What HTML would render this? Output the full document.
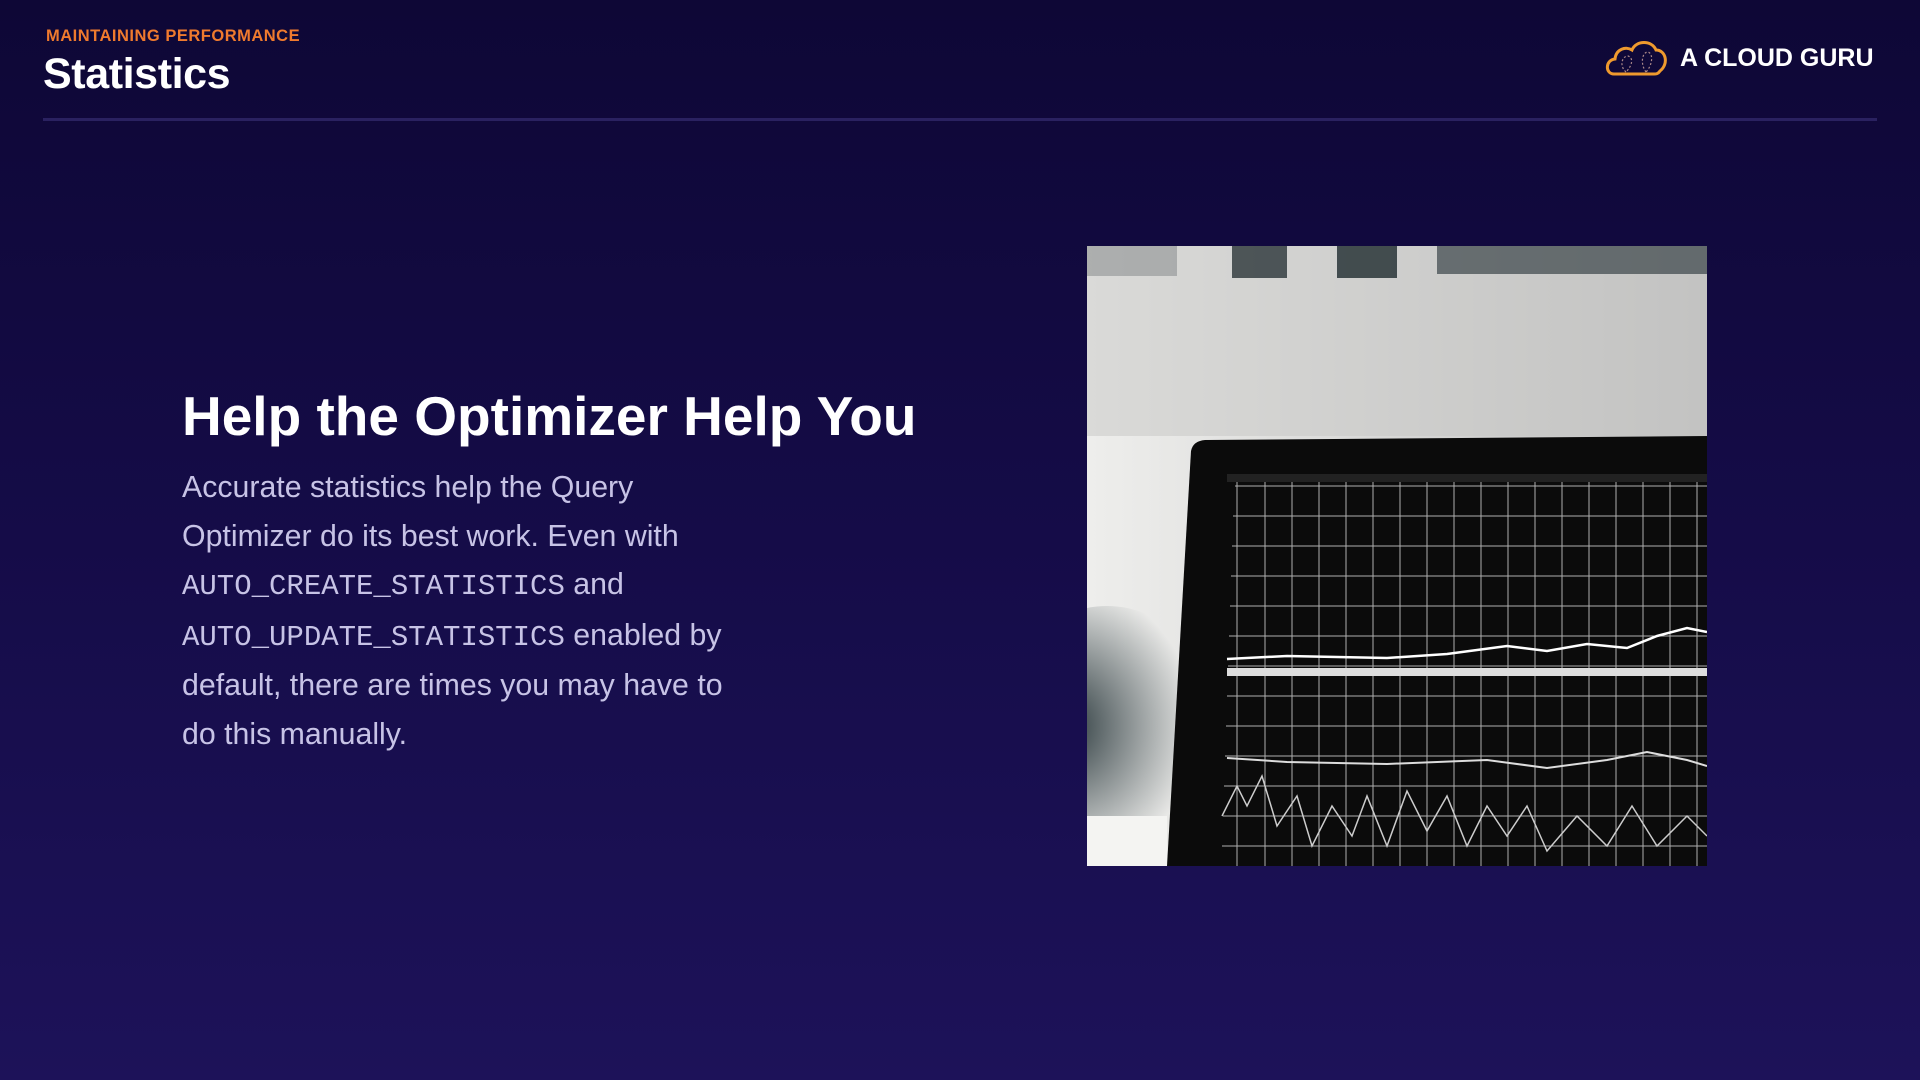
<!DOCTYPE html>
<html><head><meta charset="utf-8"><style>
html,body{margin:0;padding:0}
body{width:1920px;height:1080px;overflow:hidden;position:relative;background:linear-gradient(180deg,#0e0736 0%,#150c48 50%,#1d1259 100%);font-family:"Liberation Sans",sans-serif}
.sub{position:absolute;left:46px;top:27px;color:#ef7a2e;font-weight:bold;font-size:16.5px;letter-spacing:0.5px}
.title{position:absolute;left:43px;top:50px;color:#fff;font-weight:bold;font-size:43px;letter-spacing:-0.4px}
.rule{position:absolute;left:43px;top:118px;width:1834px;height:3px;background:#2a2160}
.logo{position:absolute;left:1604px;top:38px}
.logotext{position:absolute;left:1680px;top:44px;color:#fff;font-weight:bold;font-size:25px}
h1{position:absolute;left:182px;top:384px;margin:0;color:#fff;font-size:55px;font-weight:bold;letter-spacing:0px}
.body{position:absolute;left:182px;top:464px;color:#c7c3e6;font-size:30.3px;line-height:48.5px;width:700px}
.mono{font-family:"Liberation Mono",monospace;font-size:29px}
.img{position:absolute;left:1087px;top:246px;width:620px;height:620px}
</style></head><body>
<div class="sub">MAINTAINING PERFORMANCE</div>
<div class="title">Statistics</div>
<div class="rule"></div>
<svg class="logo" width="64" height="40" viewBox="0 0 64 40"><path d="M10 36 C1 36 1 22 11 21 C12 11 22 8 28 12 C32 2 48 2 52 12 C62 12 65 26 56 33 C54 36 52 36 50 36 Z" fill="none" stroke="#ef9a2e" stroke-width="3"/><path d="M22 34 C15 28 18 18 24 18 C30 20 28 28 22 34 M42 34 C36 26 38 14 44 14 C50 16 48 28 42 34" fill="none" stroke="#a88" stroke-width="1.2" stroke-dasharray="2 2"/></svg>
<div class="logotext">A CLOUD GURU</div>
<h1>Help the Optimizer Help You</h1>
<div class="body">Accurate statistics help the Query<br>Optimizer do its best work. Even with<br><span class="mono">AUTO_CREATE_STATISTICS</span> and<br><span class="mono">AUTO_UPDATE_STATISTICS</span> enabled by<br>default, there are times you may have to<br>do this manually.</div>
<svg class="img" viewBox="0 0 620 620">
<defs><linearGradient id="lt" x1="0" y1="0" x2="1" y2="0"><stop offset="0" stop-color="#eeeeec"/><stop offset="1" stop-color="#c0c0c0"/></linearGradient>
<radialGradient id="blob" cx="0.3" cy="0.5" r="0.6"><stop offset="0" stop-color="#2a383c"/><stop offset="1" stop-color="#2a383c" stop-opacity="0"/></radialGradient></defs>
<rect width="620" height="620" fill="url(#lt)"/>
<rect width="620" height="190" fill="#c6c6c4" opacity="0.5"/>
<rect x="145" y="0" width="55" height="32" fill="#2a3538" opacity="0.8"/><rect x="250" y="0" width="60" height="32" fill="#1e2a2e" opacity="0.8"/><rect x="350" y="0" width="270" height="28" fill="#3a4548" opacity="0.7"/><rect x="0" y="0" width="90" height="30" fill="#6a6e70" opacity="0.4"/>
<ellipse cx="20" cy="480" rx="110" ry="120" fill="url(#blob)"/>
<rect x="0" y="570" width="80" height="50" fill="#f4f4f2"/>
<path d="M118 194 L620 190 L620 620 L80 620 L104 205 Q106 195 118 194Z" fill="#0b0b0b"/>
<g stroke="#d8d8d8" stroke-width="1" opacity="0.8">
<path d="M148 240 H620 M146 270 H620 M145 300 H620 M144 330 H620 M143 360 H620 M142 390 H620 M141 420 H620 M140 450 H620 M139 480 H620 M138 510 H620 M137 540 H620 M136 570 H620 M135 600 H620"/>
<path d="M150 236 V620 M178 236 V620 M205 236 V620 M232 236 V620 M259 236 V620 M286 236 V620 M313 236 V620 M340 236 V620 M367 236 V620 M394 236 V620 M421 236 V620 M448 236 V620 M475 236 V620 M502 236 V620 M529 236 V620 M556 236 V620 M583 236 V620 M610 236 V620"/>
</g>
<rect x="140" y="228" width="480" height="8" fill="#222"/>
<path d="M140 413 L200 410 L300 412 L360 408 L420 400 L460 405 L500 398 L540 402 L570 390 L600 382 L620 386" stroke="#fff" stroke-width="2.5" fill="none"/>
<rect x="140" y="422" width="480" height="8" fill="#ddd"/>
<path d="M140 512 L200 516 L300 518 L400 514 L460 522 L520 514 L560 506 L600 514 L620 520" stroke="#ddd" stroke-width="2" fill="none"/>
<path d="M135 570 L150 540 L160 560 L175 530 L190 580 L210 550 L225 600 L245 560 L265 590 L280 550 L300 600 L320 545 L340 585 L360 550 L380 600 L400 560 L420 590 L440 560 L460 605 L490 570 L520 600 L545 560 L570 600 L600 570 L620 590" stroke="#ccc" stroke-width="1.5" fill="none"/>
</svg>
</body></html>
